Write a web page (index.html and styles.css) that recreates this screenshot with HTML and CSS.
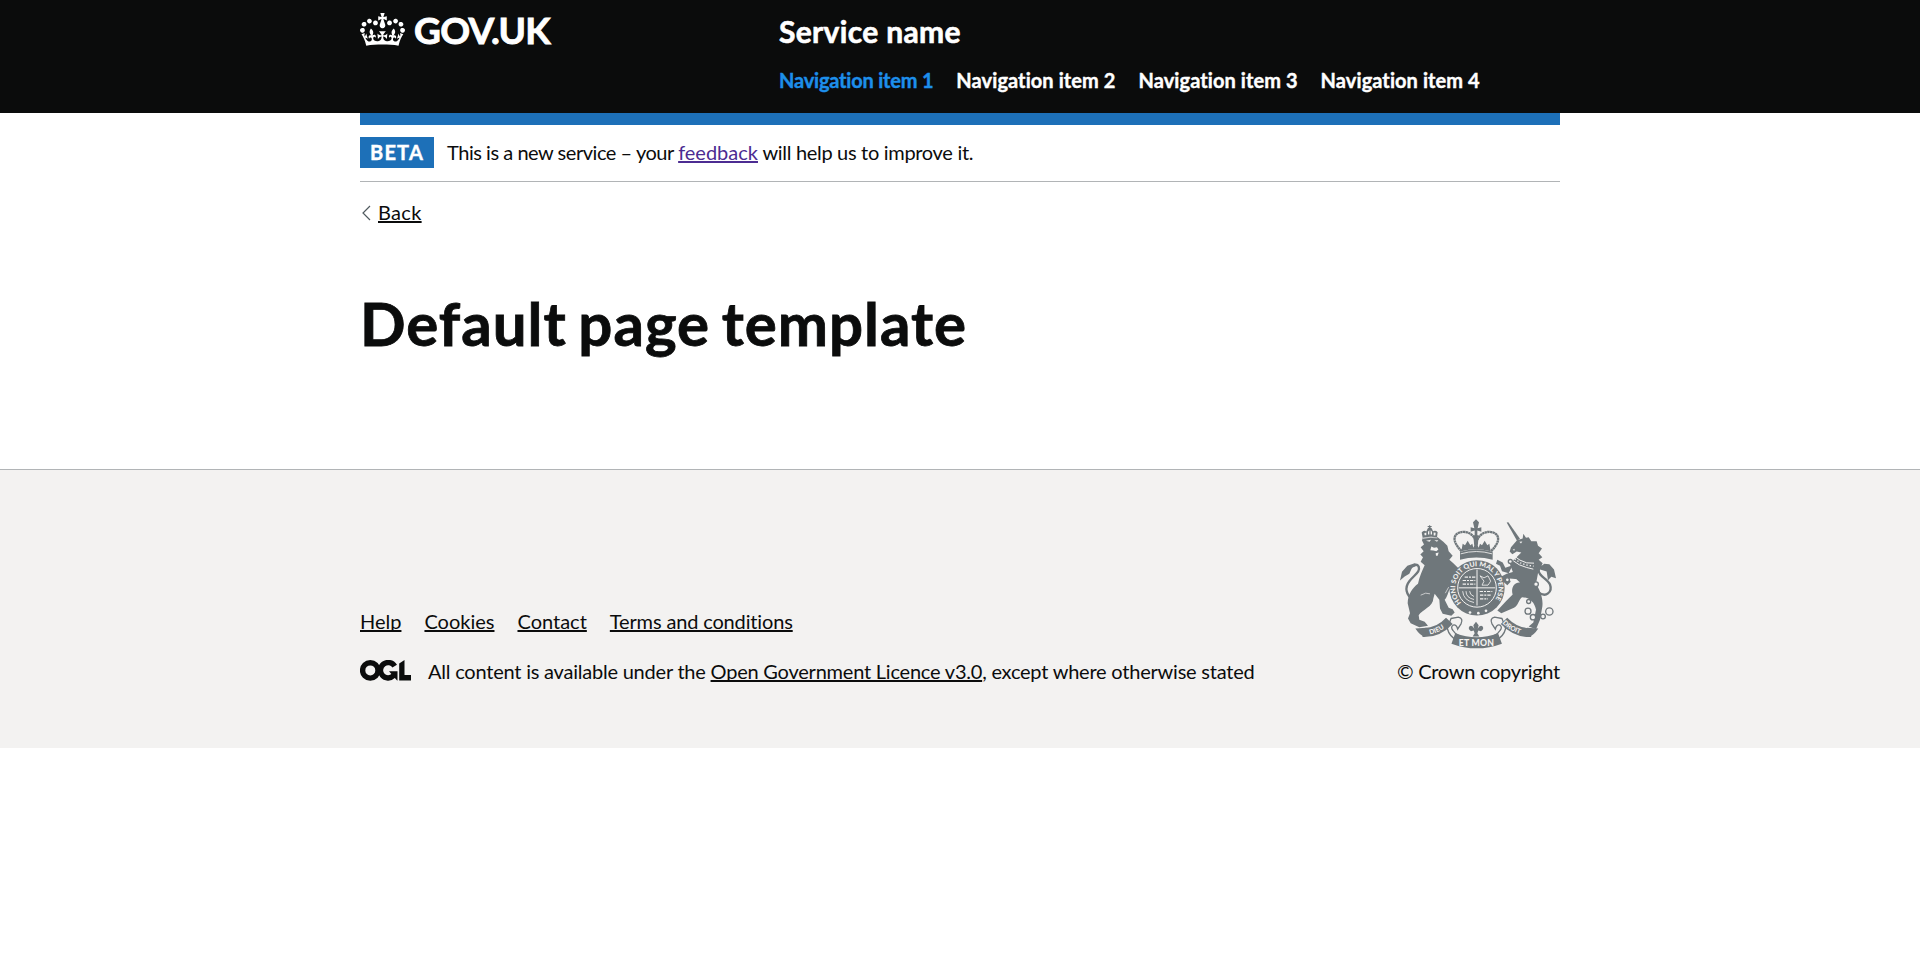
FILE: index.html
```html
<!DOCTYPE html>
<html lang="en">
<head>
<meta charset="utf-8">
<title>Default page template</title>
<link rel="stylesheet" href="styles.css">
</head>
<body>
<header class="header">
  <div class="container header-row">
    <a class="brand" href="#">
      <svg class="crown" viewBox="0 0 132 97" width="45" height="33" fill="currentColor" aria-hidden="true"><path d="M25 30.2c3.5 1.5 7.7-.2 9.1-3.7 1.5-3.6-.2-7.8-3.9-9.2-3.6-1.4-7.6.3-9.1 3.9-1.4 3.5.3 7.5 3.9 9zM9 39.5c3.6 1.5 7.8-.2 9.2-3.7 1.5-3.6-.2-7.8-3.9-9.1-3.6-1.5-7.6.2-9.1 3.8-1.4 3.5.3 7.5 3.8 9zM4.4 57.2c3.5 1.5 7.7-.2 9.1-3.8 1.5-3.6-.2-7.7-3.9-9.1-3.5-1.5-7.6.3-9.1 3.8-1.4 3.5.3 7.6 3.9 9.1zm38.3-21.4c3.5 1.5 7.7-.2 9.1-3.8 1.5-3.6-.2-7.7-3.9-9.1-3.6-1.5-7.6.3-9.1 3.8-1.3 3.6.4 7.7 3.9 9.1zm64.4-5.6c-3.6 1.5-7.8-.2-9.1-3.7-1.5-3.6.2-7.8 3.8-9.2 3.6-1.4 7.7.3 9.2 3.9 1.3 3.5-.4 7.5-3.9 9zm15.9 9.3c-3.6 1.5-7.7-.2-9.1-3.7-1.5-3.6.2-7.8 3.7-9.1 3.6-1.5 7.7.2 9.2 3.8 1.5 3.5-.3 7.5-3.8 9zm4.7 17.7c-3.6 1.5-7.8-.2-9.2-3.8-1.5-3.6.2-7.7 3.9-9.1 3.6-1.5 7.7.3 9.2 3.8 1.3 3.5-.4 7.6-3.9 9.1zM89.3 35.8c-3.6 1.5-7.8-.2-9.2-3.8-1.4-3.6.2-7.7 3.9-9.1 3.6-1.5 7.7.3 9.2 3.8 1.4 3.6-.3 7.7-3.9 9.1zM69.7 17.7l8.9 4.7V9.3l-8.9 2.8c-.2-.3-.5-.6-.9-.9L72.4 0H59.6l3.5 11.2c-.3.3-.6.5-.9.9l-8.8-2.8v13.1l8.8-4.7c.3.3.6.7.9.9l-5 15.4v.1c-.2.8-.4 1.6-.4 2.4 0 4.1 3.1 7.5 7 8.1h.2c.3 0 .7.1 1 .1.4 0 .7 0 1-.1h.2c4-.6 7.1-4.1 7.1-8.1 0-.8-.1-1.7-.4-2.4V34l-5.1-15.4c.4-.2.7-.6 1-.9zM66 92.8c16.9 0 32.8 1.1 47.1 3.2 4-16.9 8.9-26.7 14-33.5l-9.6-3.4c1 4.9 1.1 7.2 0 10.2-1.5-1.4-3-4.3-4.2-8.7L108.6 76c2.8-2 5-3.2 7.5-3.3-4.4 9.4-10 11.9-13.6 11.2-4.3-.8-6.3-4.6-5.6-7.9 1-4.7 5.7-5.9 8-.5 4.3-8.7-3-11.4-7.6-8.8 7.1-7.2 7.9-13.5 2.1-21.1-8 6.1-8.1 12.3-4.5 20.8-4.7-5.4-12.1-2.5-9.5 6.2 3.4-5.2 7.9-2 7.2 3.1-.6 4.3-6.4 7.8-13.5 7.2-10.3-.9-10.9-8-11.2-13.8 2.5-.5 7.1 1.8 11 7.3L80.2 60c-4.1 4.4-8 5.3-12.3 5.4 1.4-4.4 8-11.6 8-11.6H55.5s6.4 7.2 7.9 11.6c-4.2-.1-8-1-12.3-5.4l1.4 16.4c3.9-5.5 8.5-7.7 10.9-7.3-.3 5.8-.9 12.8-11.1 13.8-7.2.6-12.9-2.9-13.5-7.2-.7-5 3.8-8.3 7.1-3.1 2.7-8.7-4.6-11.6-9.4-6.2 3.7-8.5 3.6-14.7-4.6-20.8-5.8 7.6-5 13.9 2.2 21.1-4.7-2.6-11.9.1-7.7 8.8 2.3-5.5 7.1-4.2 8.1.5.7 3.3-1.3 7.1-5.7 7.9-3.5.7-9-1.8-13.5-11.2 2.5.1 4.7 1.3 7.5 3.3l-4.7-15.4c-1.2 4.4-2.7 7.2-4.3 8.7-1.1-3-.9-5.3 0-10.2l-9.5 3.4c5 6.9 9.9 16.7 14 33.5 14.8-2.1 30.8-3.2 47.7-3.2z"/></svg>
      <span class="brand-name">GOV.UK</span>
    </a>
    <div class="header-content">
      <a class="service-name" href="#">Service name</a>
      <nav class="nav">
        <a class="nav-link nav-link-active" href="#">Navigation item 1</a>
        <a class="nav-link" href="#">Navigation item 2</a>
        <a class="nav-link" href="#">Navigation item 3</a>
        <a class="nav-link" href="#">Navigation item 4</a>
      </nav>
    </div>
  </div>
</header>
<div class="container">
  <div class="bar"></div>
  <div class="phase-banner">
    <strong class="tag">BETA</strong>
    <span class="phase-text"><span class="phase-lead">This is a new service – your </span><a class="visited" href="#">feedback</a><span class="phase-tail"> will help us to improve it.</span></span>
  </div>
  <a class="back" href="#">
    <svg class="back-arrow" viewBox="0 0 10 16" width="10" height="16" fill="none" stroke="#505a5f" stroke-width="1.2" aria-hidden="true"><path d="M9 1 2 8l7 7"/></svg>
    <span class="back-text">Back</span>
  </a>
  <main class="main"><h1 class="title">Default page template</h1></main>
</div>
<footer class="footer">
  <div class="container footer-row">
    <div class="footer-main">
      <nav class="footer-links">
        <a href="#">Help</a><a href="#">Cookies</a><a href="#">Contact</a><a class="terms" href="#">Terms and conditions</a>
      </nav>
      <div class="licence">
        <svg class="ogl" viewBox="0 0 51 21" width="51" height="21" fill="none" stroke="currentColor" stroke-width="5.4" aria-hidden="true"><circle cx="10.3" cy="10.4" r="7.7"/><path d="M34.7 6.2A7.7 7.7 0 1 0 33.6 15.7"/><path fill="currentColor" stroke="none" d="M29 11.2h8.5v9.2h-.4zM39.2 3.4 44.5 0v15.1H51v5.3H39.2z"/></svg>
        <span class="licence-text">All content is available under the <a href="#">Open Government Licence v3.0</a>, except where otherwise stated</span>
      </div>
    </div>
    <div class="copyright">
      <svg class="crest" viewBox="30 25 468 392" width="156" height="131" fill="#6f777b" aria-hidden="true">
        <!-- lion -->
        <path fill="none" stroke="#6f777b" stroke-width="7" d="M72 272C46 256 44 232 58 214 74 194 92 186 86 170 80 160 66 166 58 178"/>
        <path d="M30 212l6-26 16-18 22-8 10 6-18 8-8 18-14 8z"/>
        <path d="M98 84L96 92 102 104 92 112 101 124 91 134 99 142 92 156 104 166C98 180 88 200 84 222 68 234 54 252 53 280L60 310 54 326 62 340 88 352 114 348 104 336 88 330 86 316C96 300 130 290 130 266L134 252 148 270 150 296 158 312 184 318 194 308 188 298 176 294 164 270C176 256 174 240 184 232L204 200 198 184 206 176 190 160 178 150 188 138 176 124 172 108 160 96 140 80z"/>
        <path d="M98 84l-3-16q6-8 14-3 3-10 10-14 8 4 10 13 8-4 14 3l-2 15q-20-4-43 2z"/>
        <path stroke="#6f777b" stroke-width="3" d="M119 46v12M113 50h12"/>
        <path fill="#f3f2f1" d="M103 70l6-2v8h-5zM114 66l4-5v13h-4zM122 61l4 5v8h-4zM131 68l6 1-1 8h-5zM108 93l15-3-4 6zM133 91l12 0-4 5zM124 110l8 4 9-2 4 7-6 5-9-2-9-1zM137 130l9-2-3 10h-5z"/>
        <path fill="none" stroke="#f3f2f1" stroke-width="2" d="M98 86q22-6 44-2M92 256q16-10 28-4M176 232l-10 18"/>
        <!-- unicorn -->
        <path d="M350 38l5-1 35 50-9 6z"/>
        <path fill="none" stroke="#6f777b" stroke-width="7" d="M444 246C468 266 488 246 480 224 472 206 446 200 446 182 448 166 466 166 476 178"/>
        <path d="M448 178l14-16 16 1 14 16 6 26-14-4-10 10-4-26z"/>
        <path d="M381 91L363 112 359 125 367 133 380 125 394 128 384 138C376 148 366 152 360 164L370 190C374 205 384 212 390 218 372 216 362 236 368 254L350 272 322 302 334 310 372 294C386 286 384 272 396 262 416 262 434 276 438 300L430 338 416 350 438 358 450 330 456 296C462 270 450 240 438 222L444 190 458 160 446 150 457 142 446 130 456 116 444 108 440 94 424 94 416 82 408 84 400 72 398 86z"/>
        <path d="M368 166L346 174 338 158 322 150 318 162 330 168 336 184 356 190zM376 184L350 192 334 200 340 216 352 226 362 216 358 206 384 208z"/>
        <path fill="none" stroke="#f3f2f1" stroke-width="3" d="M376 141l14 10 20 8 22 1M370 153l18 12 22 8 20 5"/>
        <path fill="none" stroke="#f3f2f1" stroke-width="4" stroke-dasharray="4 6" d="M374 147l17 12 20 7 20 3"/>
        <path fill="#f3f2f1" d="M388 96l9-1-4 6zM368 120l6-3-1 6z"/>
        <g fill="#f3f2f1" stroke="#6f777b" stroke-width="4"><circle cx="361" cy="155" r="6"/><circle cx="352" cy="210" r="6"/><circle cx="438" cy="223" r="7"/><circle cx="416" cy="275" r="6"/><circle cx="414" cy="304" r="9"/><circle cx="429" cy="322" r="8"/><circle cx="459" cy="320" r="7"/><circle cx="478" cy="305" r="11"/></g>
        <!-- crown -->
        <path fill="none" stroke="#6f777b" stroke-width="7" stroke-dasharray="7 1" d="M215 124C182 92 190 68 220 66 240 66 250 78 256 90M303 124C336 92 328 68 298 66 278 66 268 78 262 90"/>
        <path d="M210 126q49-15 98 0v24q-49-14-98 0z"/>
        <path fill="none" stroke="#f3f2f1" stroke-width="2.5" d="M212 132q47-14 94 0"/>
        <path d="M254 78v-16l-12 4V52l11 3-4-18 9-9 9 9-4 18 11-3v14l-12-4v16zM214 124l4-22 7 4 8-13 8 13 6-4 3 12 8-18 8 18 4-12 6 4 8-13 8 13 6-4 4 22q-44-12-88 0zM250 76h16l-3 36h-10z"/>
        <!-- garter and shield -->
        <circle cx="261" cy="234" r="83"/>
        <circle cx="261" cy="234" r="58" fill="none" stroke="#f3f2f1" stroke-width="3"/>
        <path id="garter" fill="none" d="M214 279a65 65 0 1 1 98-5"/>
        <text class="motto motto-garter" textLength="290" lengthAdjust="spacingAndGlyphs"><textPath href="#garter">HONI SOIT QUI MAL Y PENSE</textPath></text>
        <path fill="none" stroke="#f3f2f1" stroke-width="3" d="M261 179v108M206 234h110"/>
        <path fill="none" stroke="#f3f2f1" stroke-width="3.5" stroke-dasharray="10 3 6 3" d="M224 202h32M218 212h38M218 223h38M269 245h38M270 256h34M270 267h24"/>
        <path fill="none" stroke="#f3f2f1" stroke-width="2.5" d="M270 198l12 6 12-6 8 16-8 12h-18l6-12zM218 244q2 28 34 34M228 244q0 20 24 25M239 244q0 11 13 16"/>
        <g fill="#f3f2f1"><circle cx="240" cy="308" r="4"/><circle cx="265" cy="310" r="4"/><circle cx="288" cy="303" r="4"/></g>
        <!-- scroll -->
        <path fill="#f3f2f1" stroke="#6f777b" stroke-width="4" d="M183 326l22-4q16 4 8 20l-10 16q-4-16-14-12-8 6 0 16 7 12 19 16l-6 14q-24-12-30-36zM336 326l-22-4q-16 4-8 20l10 16q4-16 14-12 8 6 0 16-7 12-19 16l6 14q24-12 30-36z"/>
        <g fill="none" stroke="#6f777b" stroke-width="27">
          <path d="M98 368Q144 370 178 333M423 368Q378 370 342 333"/>
          <path d="M190 386Q260 412 330 386" stroke-width="33"/>
        </g>
        <path d="M76 356l34-2-6 27q-14-4-28-25zM445 356l-34-2 6 27q14-4 28-25z"/>
        <path d="M258 336l8 10-3 11q7-13 15-7 5 8-5 14l-8-2-3 8 6 10h-20l6-10-3-8-8 2q-10-6-5-14 8-6 15 7l-3-11z"/>
        <path id="scroll-left" fill="none" d="M116 375Q158 367 188 332"/><path id="scroll-right" fill="none" d="M337 340Q362 368 416 379"/>
        <text class="motto motto-scroll"><textPath href="#scroll-left" startOffset="4">DIEU</textPath></text>
        <text class="motto motto-scroll"><textPath href="#scroll-right">DROIT</textPath></text>
        <text class="motto motto-base" x="206" y="408" textLength="106">ET MON</text>
      </svg>
      <span class="copyright-text">© Crown copyright</span>
    </div>
  </div>
</footer>
</body>
</html>
```
FILE: styles.css
```css
* { box-sizing: border-box; }
body {
  margin: 0;
  background: #fff;
  color: #0b0c0c;
  font-family: Lato, "Noto Sans", sans-serif;
  font-size: 20px;
  line-height: 25px;
  font-variant-ligatures: none;
}
a { color: inherit; text-underline-offset: 1px; text-decoration-thickness: 2px; text-decoration-skip-ink: none; }
svg { display: block; }
.container { width: 1200px; margin: 0 auto; }
.header { height: 113px; background: #0b0c0c; color: #fff; }
.header a { text-decoration: none; }
.header-row { display: flex; }
.brand { display: flex; width: 419px; padding-top: 13px; }
.brand-name { margin: -2px 0 0 9px; font-size: 37px; font-weight: 700; line-height: 37px; letter-spacing: -0.65px; -webkit-text-stroke: 0.9px; }
.header-content { padding-top: 12px; }
.service-name { display: block; font-size: 30px; font-weight: 700; line-height: 38px; letter-spacing: 0.33px; -webkit-text-stroke: 0.6px; }
.nav { display: flex; gap: 23px; margin-top: 18px; font-weight: 700; -webkit-text-stroke: 0.4px; }
.nav-link { white-space: nowrap; letter-spacing: 0.08px; }
.nav-link-active { color: #1d8feb; letter-spacing: -0.2px; }
.bar { height: 12px; background: #1d70b8; }
.phase-banner { display: flex; height: 57px; padding-top: 12px; border-bottom: 1px solid #b1b4b6; }
.tag { width: 74px; height: 31px; margin-right: 13px; background: #1d70b8; color: #fff; font-weight: 700; letter-spacing: 1.2px; line-height: 31px; text-align: center; -webkit-text-stroke: 0.4px; }
.phase-text { line-height: 31px; white-space: nowrap; }
.phase-lead { letter-spacing: -0.46px; }
.phase-tail { letter-spacing: -0.31px; }
.visited { color: #4c2c92; }
.back { display: flex; align-items: center; width: 62px; height: 25px; margin-top: 18px; text-decoration: none; }
.back-arrow { margin: 0 7px 0 1px; }
.back-text { letter-spacing: 0.3px; text-decoration: underline 2px; text-underline-offset: 1px; }
.main { padding-top: 61px; }
.title { margin: 0; font-size: 60px; line-height: 75px; font-weight: 700; letter-spacing: 1px; word-spacing: -4px; white-space: nowrap; -webkit-text-stroke: 0.8px; }
.footer { height: 279px; margin-top: 108px; padding-top: 48px; border-top: 1px solid #b1b4b6; background: #f3f2f1; }
.footer-row { display: flex; justify-content: space-between; align-items: flex-end; height: 166px; }
.footer-links { display: flex; gap: 23px; margin-bottom: 25px; }
.terms { letter-spacing: -0.15px; }
.licence { display: flex; white-space: nowrap; }
.licence-text { letter-spacing: -0.22px; }
.ogl { margin: 1px 17px 0 0; }
.copyright { display: flex; flex-direction: column; align-items: flex-end; }
.crest { margin: 0 4px 10px 0; }
.copyright-text { white-space: nowrap; letter-spacing: -0.28px; }
.motto { fill: #f3f2f1; font-family: Lato, sans-serif; font-weight: 900; }
.motto-garter { font-size: 20px; }
.motto-scroll { font-size: 20px; }
.motto-base { font-size: 26px; }
```
